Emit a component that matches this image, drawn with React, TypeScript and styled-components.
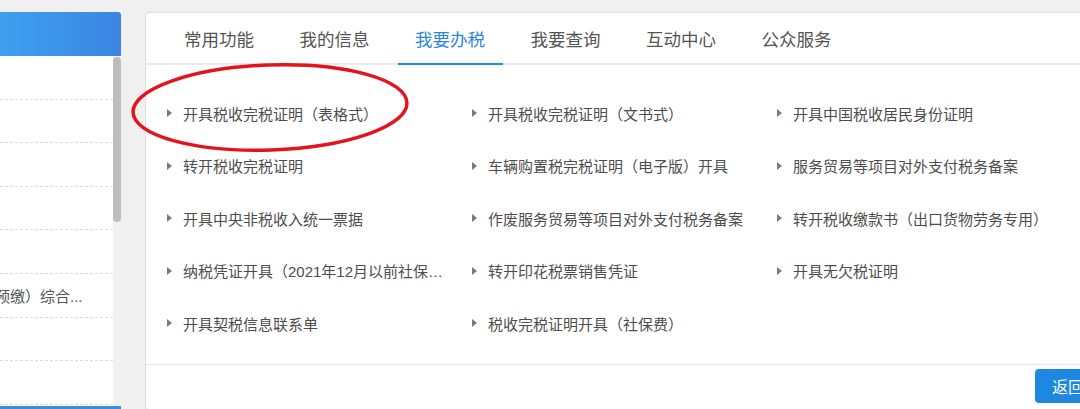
import { createGlobalStyle, styled } from "styled-components";

const GlobalStyle = createGlobalStyle`
  html, body {
    margin: 0;
    padding: 0;
    background: #f0f0f0;
    overflow: hidden;
    font-family: "Noto Sans CJK SC", "Noto Sans", sans-serif;
  }
`;

const Page = styled.div`
  position: relative;
  display: flex;
  align-items: flex-start;
  gap: 24px;
  width: 1120px;
  height: 409px;
  padding-top: 12px;
  box-sizing: border-box;
`;

const LeftPanel = styled.div`
  width: 121px;
  flex-shrink: 0;
  display: flex;
  flex-direction: column;
  background: #fff;
`;

const LeftHeader = styled.div`
  height: 44px;
  border-top-right-radius: 3px;
  background: linear-gradient(to right, #3ea0ef, #3a86e2);
`;

const LeftBody = styled.div`
  display: flex;
  height: 350px;
`;

const RowList = styled.div`
  flex: 1;
  display: flex;
  flex-direction: column;
  overflow: hidden;
`;

const LeftRow = styled.div`
  height: 43.6px;
  flex-shrink: 0;
  box-sizing: border-box;
  border-bottom: 1px dashed #dcdcdc;
  display: flex;
  align-items: center;
  white-space: nowrap;
  font-size: 15px;
  color: #555;
`;

const RowText = styled.span`
  margin-left: -5px;
  font-family: "Liberation Sans", "Noto Sans CJK SC", sans-serif;
`;

const ScrollTrack = styled.div`
  width: 8px;
  background: #f1f1f1;
  padding-top: 1px;
`;

const ScrollThumb = styled.div`
  height: 165px;
  border-radius: 4px;
  background: #bdbdbd;
`;

const LeftFooter = styled.div`
  height: 3px;
  background: #3a8ee6;
`;

const RightPanel = styled.div`
  flex: 1;
  background: #fff;
  border: 1px solid #dedede;
  border-radius: 4px;
  display: flex;
  flex-direction: column;
`;

const Tabs = styled.div`
  display: flex;
  height: 52px;
  padding-left: 21px;
  box-sizing: border-box;
  border-bottom: 2px solid #ebebeb;
`;

const Tab = styled.div<{ $active?: boolean }>`
  padding: 0 18px 0 17px;
  margin-right: 10.5px;
  display: flex;
  align-items: center;
  font-size: 17.5px;
  color: ${(p) => (p.$active ? "#2a87de" : "#555")};
  border-bottom: 2px solid ${(p) => (p.$active ? "#2a87de" : "transparent")};
  margin-bottom: -2px;
`;

const Grid = styled.div`
  display: grid;
  grid-template-columns: repeat(3, 305px);
  grid-auto-rows: 52.5px;
  padding: 22px 0 14px 21px;
`;

const Item = styled.div`
  display: flex;
  align-items: center;
  padding-right: 22px;
  min-width: 0;
  font-size: 15px;
  color: #4d4d4d;
`;

const Arrow = styled.span`
  flex-shrink: 0;
  width: 0;
  height: 0;
  border-left: 5px solid #7a7a7a;
  border-top: 4px solid transparent;
  border-bottom: 4px solid transparent;
  margin-right: 11px;
`;

const Label = styled.span`
  white-space: nowrap;
  overflow: hidden;
  text-overflow: ellipsis;
  font-family: "Liberation Sans", "Noto Sans CJK SC", sans-serif;
`;

const Footer = styled.div`
  border-top: 1px solid #e2e2e2;
  display: flex;
  justify-content: flex-end;
  padding: 4px 16px 6px 0;
`;

const BackButton = styled.button`
  width: 68px;
  height: 34px;
  border: 0;
  border-radius: 4px;
  background: #1e88e0;
  color: #fff;
  font-family: inherit;
  font-size: 16px;
  text-align: left;
  padding-left: 17px;
`;

const Annotation = styled.svg`
  position: absolute;
  left: 0;
  top: 0;
  pointer-events: none;
`;

const tabs = ["常用功能", "我的信息", "我要办税", "我要查询", "互动中心", "公众服务"];

const items = [
  "开具税收完税证明（表格式）",
  "开具税收完税证明（文书式）",
  "开具中国税收居民身份证明",
  "转开税收完税证明",
  "车辆购置税完税证明（电子版）开具",
  "服务贸易等项目对外支付税务备案",
  "开具中央非税收入统一票据",
  "作废服务贸易等项目对外支付税务备案",
  "转开税收缴款书（出口货物劳务专用）",
  "纳税凭证开具（2021年12月以前社保费）",
  "转开印花税票销售凭证",
  "开具无欠税证明",
  "开具契税信息联系单",
  "税收完税证明开具（社保费）",
];

const leftRows = ["", "", "", "", "", "预缴）综合...", "", ""];

export default function App() {
  return (
    <>
      <GlobalStyle />
      <Page>
        <LeftPanel>
          <LeftHeader />
          <LeftBody>
            <RowList>
              {leftRows.map((r, i) => (
                <LeftRow key={i}>
                  <RowText>{r}</RowText>
                </LeftRow>
              ))}
            </RowList>
            <ScrollTrack>
              <ScrollThumb />
            </ScrollTrack>
          </LeftBody>
          <LeftFooter />
        </LeftPanel>
        <RightPanel>
          <Tabs>
            {tabs.map((t) => (
              <Tab key={t} $active={t === "我要办税"}>
                {t}
              </Tab>
            ))}
          </Tabs>
          <Grid>
            {items.map((it) => (
              <Item key={it}>
                <Arrow />
                <Label>{it}</Label>
              </Item>
            ))}
          </Grid>
          <Footer>
            <BackButton>返回</BackButton>
          </Footer>
        </RightPanel>
        <Annotation width="1080" height="409">
          <ellipse
            cx="270"
            cy="107.5"
            rx="137"
            ry="42.5"
            transform="rotate(-2 270 107.5)"
            fill="none"
            stroke="#e3141d"
            strokeWidth="3.5"
          />
        </Annotation>
      </Page>
    </>
  );
}
